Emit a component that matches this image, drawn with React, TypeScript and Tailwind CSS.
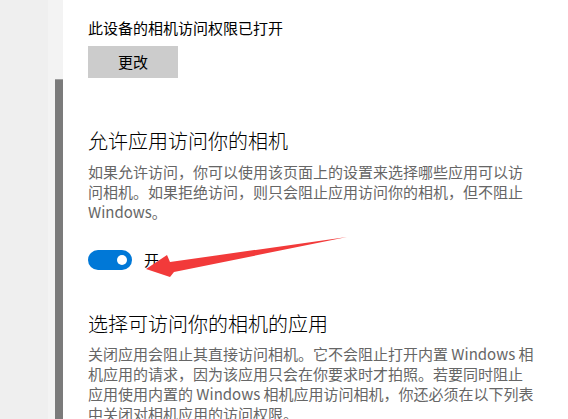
import React from "react";

const FONT = "font-['Noto_Sans_CJK_SC','Noto_Sans',sans-serif]";

function Para({ lines }: { lines: string[] }) {
  return (
    <div className="text-[15px] leading-[20px] text-[#666666]">
      {lines.map((line) => (
        <div key={line} className="whitespace-nowrap">
          {line}
        </div>
      ))}
    </div>
  );
}

function Toggle({ label }: { label: string }) {
  return (
    <div className="flex items-center gap-[12px]">
      <div className="flex h-[20px] w-[44px] items-center justify-end rounded-full bg-[#0078d7] pr-[5px]">
        <div className="size-[10px] rounded-full bg-white" />
      </div>
      <span className="text-[15px] leading-[20px] text-black">{label}</span>
    </div>
  );
}

export default function App() {
  return (
    <div className={`relative flex h-[419px] w-[568px] overflow-hidden bg-white ${FONT}`}>
      <div className="w-[48px] bg-[#efefef]" />
      <div className="flex w-[15px] bg-[#f3f3f3] pl-[7px] pt-[79px]">
        <div className="w-[8px] border-t border-[#a0a0a0] bg-[#7b7b7b]" />
      </div>

      <main className="flex-1 pl-[25px] pt-[18px]">
        <p className="text-[15px] leading-[20px] text-black">此设备的相机访问权限已打开</p>
        <button className="mt-[8px] h-[32px] w-[90px] bg-[#cccccc] text-[15px] text-black">
          更改
        </button>

        <h2 className="mt-[49px] text-[20px] leading-[28px] font-light text-black">
          允许应用访问你的相机
        </h2>
        <div className="mt-[7px]">
          <Para
            lines={[
              "如果允许访问，你可以使用该页面上的设置来选择哪些应用可以访",
              "问相机。如果拒绝访问，则只会阻止应用访问你的相机，但不阻止",
              "Windows。",
            ]}
          />
        </div>

        <div className="mt-[28px]">
          <Toggle label="开" />
        </div>

        <h2 className="mt-[40px] text-[20px] leading-[28px] font-light text-black">
          选择可访问你的相机的应用
        </h2>
        <div className="mt-[6px]">
          <Para
            lines={[
              "关闭应用会阻止其直接访问相机。它不会阻止打开内置 Windows 相",
              "机应用的请求，因为该应用只会在你要求时才拍照。若要同时阻止",
              "应用使用内置的 Windows 相机应用访问相机，你还必须在以下列表",
              "中关闭对相机应用的访问权限。",
            ]}
          />
        </div>
      </main>

      {/* red annotation arrow */}
      <svg
        className="pointer-events-none absolute left-0 top-0"
        width="568"
        height="419"
        viewBox="0 0 568 419"
      >
        <polygon
          points="146,269 167,255 170,262 347,237 174,272 170,277"
          fill="#f23a3a"
        />
      </svg>
    </div>
  );
}
